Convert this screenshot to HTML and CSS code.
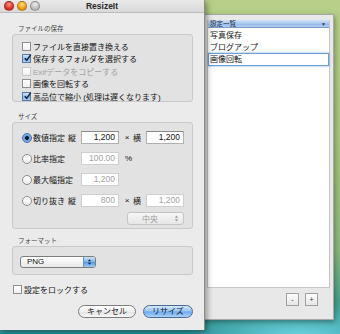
FILE: index.html
```html
<!DOCTYPE html>
<html lang="ja">
<head>
    <meta charset="UTF-8">
    <title>ResizeIt</title>
    <link rel="stylesheet" href="styles.css">
</head>
<body>
    <div class="desktop">
        <!-- 설정 목록 창 (뒤) -->
        <div class="win list-win">
            <div class="list">
                <div class="list-head"><span>設定一覧</span><span class="sort">▼</span></div>
                <div class="list-row">写真保存</div>
                <div class="list-row">ブログアップ</div>
                <div class="list-row editing">画像回転</div>
            </div>
            <div class="list-foot">
                <span class="sq-btn">-</span>
                <span class="sq-btn">+</span>
            </div>
        </div>

        <!-- 메인 패널 -->
        <div class="win panel">
            <div class="titlebar">
                <div class="lights">
                    <i class="light red"></i>
                    <i class="light yellow"></i>
                    <i class="light off"></i>
                </div>
                <div class="title">ResizeIt</div>
            </div>
            <div class="panel-body">
                <div class="group-label first">ファイルの保存</div>
                <div class="group g-file">
                    <div class="check-row"><span class="cb"></span>ファイルを直接置き換える</div>
                    <div class="check-row"><span class="cb on"><svg viewBox="0 0 10 10"><path d="M2 5.2 L4.2 7.6 L8.6 1.2" /></svg></span>保存するフォルダを選択する</div>
                    <div class="check-row disabled"><span class="cb"></span>Exifデータをコピーする</div>
                    <div class="check-row"><span class="cb"></span>画像を回転する</div>
                    <div class="check-row"><span class="cb on"><svg viewBox="0 0 10 10"><path d="M2 5.2 L4.2 7.6 L8.6 1.2" /></svg></span>高品位で縮小 (処理は遅くなります)</div>
                </div>

                <div class="group-label g2">サイズ</div>
                <div class="group g-size">
                    <div class="size-grid">
                        <div class="radio-cell"><span class="rb on"></span>数値指定</div>
                        <div class="mid">縦</div>
                        <div class="field">1,200</div>
                        <div class="times">×</div>
                        <div class="mid">横</div>
                        <div class="field">1,200</div>

                        <div class="radio-cell"><span class="rb"></span>比率指定</div>
                        <div></div>
                        <div class="field off">100.00</div>
                        <div class="pct">%</div>
                        <div></div>
                        <div></div>

                        <div class="radio-cell"><span class="rb"></span>最大幅指定</div>
                        <div></div>
                        <div class="field off">1,200</div>
                        <div></div>
                        <div></div>
                        <div></div>

                        <div class="radio-cell"><span class="rb"></span>切り抜き</div>
                        <div class="mid">縦</div>
                        <div class="field off">800</div>
                        <div class="times">×</div>
                        <div class="mid">横</div>
                        <div class="field off">1,200</div>
                    </div>
                    <div class="align-row">
                        <div class="popup small off">
                            <span>中央</span>
                            <svg class="arrows" viewBox="0 0 6 10"><path d="M1 4 L3 1.5 L5 4 Z M1 6 L3 8.5 L5 6 Z" /></svg>
                        </div>
                    </div>
                </div>

                <div class="group-label g3">フォーマット</div>
                <div class="group g-format">
                    <div class="popup fmt">
                        <span>PNG</span>
                        <span class="popup-btn"><svg viewBox="0 0 6 10"><path d="M1 4 L3 1.5 L5 4 Z M1 6 L3 8.5 L5 6 Z" /></svg></span>
                    </div>
                </div>

                <div class="check-row lock"><span class="cb"></span>設定をロックする</div>

                <div class="buttons">
                    <span class="btn">キャンセル</span>
                    <span class="btn primary">リサイズ</span>
                </div>
            </div>
        </div>
    </div>
</body>
</html>
```

FILE: styles.css
```css
*{
    margin: 0;
    padding: 0;
    box-sizing: border-box;
}
html, body{
    width: 340px;
    height: 334px;
    overflow: hidden;
}
body{
    font-family: "Liberation Sans", "Noto Sans CJK JP", sans-serif;
    color: #141414;
}
.desktop{
    position: relative;
    width: 340px;
    height: 334px;
    background:
        radial-gradient(ellipse 120px 40px at 300px 340px, rgba(120, 225, 235, 0.9), rgba(120, 225, 235, 0) 100%),
        linear-gradient(180deg, #b7cf88 0%, #a6c47c 45%, #8bb87e 75%, #3e9a8c 93%, #2a8f98 100%);
}

/* windows */
.win{
    position: absolute;
}
.list-win{
    left: 190px;
    top: 14px;
    width: 144px;
    height: 306px;
    background-color: #e8e8e8;
    border: 1px solid #a9a9a9;
    box-shadow: 1px 2px 5px rgba(0, 0, 0, 0.35);
    display: flex;
    flex-direction: column;
}
.list{
    margin: 5px 3px 0 16px;
    height: 268px;
    background-color: #fff;
    border: 1px solid #c6c6c6;
    border-top: none;
    font-size: 8px;
}
.list-head{
    height: 8px;
    display: flex;
    justify-content: space-between;
    align-items: center;
    padding: 0 3px 0 2px;
    font-size: 6.5px;
    line-height: 8px;
    color: #1c2a40;
    background: linear-gradient(180deg, #d2e3f6 0%, #a9c8ee 50%, #8fb6e6 51%, #b4d0f2 100%);
    border-bottom: 1px solid #7a9cc8;
}
.list-head .sort{
    font-size: 5px;
    color: #2a3a55;
}
.list-row{
    height: 12px;
    line-height: 12px;
    padding-left: 2px;
}
.list-row:first-of-type{
    margin-top: 0;
}
.list-head + .list-row{
    margin-top: 2px;
}
.list-row.editing{
    height: 13px;
    line-height: 11px;
    border: 1px solid #6f9fd8;
    box-shadow: 0 0 2px rgba(80, 140, 220, 0.8);
    margin-top: -1px;
    padding-left: 1px;
}
.list-foot{
    flex: 1;
    display: flex;
    justify-content: flex-end;
    align-items: flex-start;
    gap: 6px;
    padding: 5px 15px 0 0;
}
.sq-btn{
    width: 13px;
    height: 13px;
    border: 1px solid #a0a0a0;
    background: linear-gradient(180deg, #fdfdfd, #e6e6e6);
    font-size: 7px;
    line-height: 11px;
    text-align: center;
    color: #333;
}

/* main panel */
.panel{
    left: 0;
    top: 0;
    width: 205px;
    height: 330px;
    background-color: #ebebeb;
    border-right: 1px solid #8c8c8c;
    box-shadow: 2px 2px 6px rgba(0, 0, 0, 0.4);
}
.titlebar{
    position: relative;
    height: 13px;
    background: linear-gradient(180deg, #e9e9e9, #d9d9d9);
    border-bottom: 1px solid #bcbcbc;
}
.lights{
    display: flex;
    gap: 3px;
    padding: 1px 0 0 4px;
}
.light{
    width: 10px;
    height: 10px;
    border-radius: 50%;
    border: 1px solid rgba(0, 0, 0, 0.25);
}
.light.red{
    background: radial-gradient(circle at 50% 30%, #ff9c90 0%, #e0372c 55%, #b8201a 100%);
}
.light.yellow{
    background: radial-gradient(circle at 50% 30%, #ffe08a 0%, #f0a318 55%, #c87a08 100%);
}
.light.off{
    background: radial-gradient(circle at 50% 30%, #eeeeee 0%, #bdbdbd 60%, #a6a6a6 100%);
}
.title{
    position: absolute;
    left: 0;
    right: 0;
    top: 0;
    text-align: center;
    font-size: 8.5px;
    line-height: 12px;
    font-weight: bold;
    color: #2a2a2a;
}

.panel-body{
    padding: 0 11px 0 12px;
    font-size: 8px;
}
.group-label{
    height: 8px;
    line-height: 8px;
    font-size: 6.5px;
    color: #444;
    padding-left: 6px;
    margin-bottom: 1px;
}
.group-label.first{ margin-top: 12px; }
.group-label.g2{ margin-top: 11px; }
.group-label.g3{ margin-top: 8px; }

.group{
    border: 1px solid #c9c9c9;
    border-radius: 3px;
    background-color: #e2e2e2;
}
.g-file{
    height: 68px;
    padding: 5px 0 0 9px;
}
.check-row{
    height: 12.5px;
    display: flex;
    align-items: center;
    white-space: nowrap;
}
.check-row.disabled{
    color: #a3a3a3;
}
.check-row.disabled .cb{
    border-color: #c8c8c8;
}
.cb{
    width: 9px;
    height: 9px;
    margin-right: 2px;
    border: 1px solid #8f8f8f;
    background: linear-gradient(180deg, #fff, #f0f0f0);
    flex-shrink: 0;
    position: relative;
}
.cb.on{
    border-color: #5a79a4;
    background: linear-gradient(180deg, #d4e6fa 0%, #8ab8ea 55%, #a8cdf4 100%);
}
.cb svg{
    position: absolute;
    left: 0;
    top: -2px;
    width: 9px;
    height: 10px;
    fill: none;
    stroke: #12233d;
    stroke-width: 1.6;
}

/* size */
.g-size{
    height: 107px;
    padding: 4px 0 0 9px;
}
.size-grid{
    display: grid;
    grid-template-columns: 46px 13px 38px 14px 13px 38px;
    grid-auto-rows: 21px;
    align-items: center;
}
.radio-cell{
    display: flex;
    align-items: center;
    white-space: nowrap;
}
.rb{
    width: 10px;
    height: 10px;
    border-radius: 50%;
    border: 1px solid #8d8d8d;
    background: linear-gradient(180deg, #fff, #ececec);
    margin-right: 1px;
    flex-shrink: 0;
    position: relative;
}
.rb.on{
    border-color: #4d6e9c;
    background: radial-gradient(circle at 50% 50%, #0e1c33 0, #0e1c33 1.6px, #5e9ae0 2.2px, #9cc6f2 100%);
}
.mid{
    text-align: left;
}
.field{
    height: 13px;
    border: 1px solid #b0b0b0;
    border-top-color: #8a8a8a;
    background-color: #fff;
    text-align: right;
    padding-right: 3px;
    font-size: 8.5px;
    line-height: 11px;
}
.field.off{
    color: #a2a2a2;
    border-color: #cfcfcf;
}
.times{
    text-align: center;
    padding-left: 2px;
}
.pct{
    padding-left: 6px;
}
.align-row{
    display: flex;
    justify-content: flex-end;
    margin-top: 1px;
    padding-right: 8px;
}
.popup{
    height: 13px;
    border: 1px solid #999;
    border-radius: 3px;
    background: linear-gradient(180deg, #ffffff, #e9e9e9);
    display: flex;
    align-items: center;
    justify-content: space-between;
}
.popup.small{
    width: 57px;
    padding: 0 4px 0 14px;
    color: #9c9c9c;
    border-color: #c4c4c4;
    background: linear-gradient(180deg, #f7f7f7, #e6e6e6);
}
.arrows{
    width: 5px;
    height: 9px;
    fill: #9a9a9a;
}

/* format */
.g-format{
    height: 29px;
    padding: 9px 0 0 7px;
}
.popup.fmt{
    width: 76px;
    height: 12px;
    border-color: #7d7d7d;
    padding-left: 6px;
    overflow: hidden;
}
.popup.fmt span:first-child{
    font-size: 8px;
    line-height: 10px;
}
.popup-btn{
    width: 12px;
    height: 100%;
    display: flex;
    align-items: center;
    justify-content: center;
    background: linear-gradient(180deg, #cfe3fa 0%, #79aeea 50%, #5596e0 51%, #9fcaf6 100%);
    border-left: 1px solid #6d8fb8;
}
.popup-btn svg{
    width: 5px;
    height: 8px;
    fill: #10223c;
}

.check-row.lock{
    height: 12px;
    margin-top: 8px;
    padding-left: 1px;
}

.buttons{
    display: flex;
    justify-content: flex-end;
    gap: 7px;
    margin-top: 10px;
}
.btn{
    width: 58px;
    height: 13px;
    border: 1px solid #7d7d7d;
    border-radius: 7px;
    background: linear-gradient(180deg, #ffffff 0%, #f0f0f0 50%, #e2e2e2 51%, #f8f8f8 100%);
    text-align: center;
    font-size: 8px;
    line-height: 11px;
    color: #222;
}
.btn.primary{
    width: 50px;
    border-color: #4a6a98;
    background: linear-gradient(180deg, #d6e8fb 0%, #96c2f0 48%, #6fa8ea 52%, #a9d3f8 100%);
    color: #0e1c30;
}
```
